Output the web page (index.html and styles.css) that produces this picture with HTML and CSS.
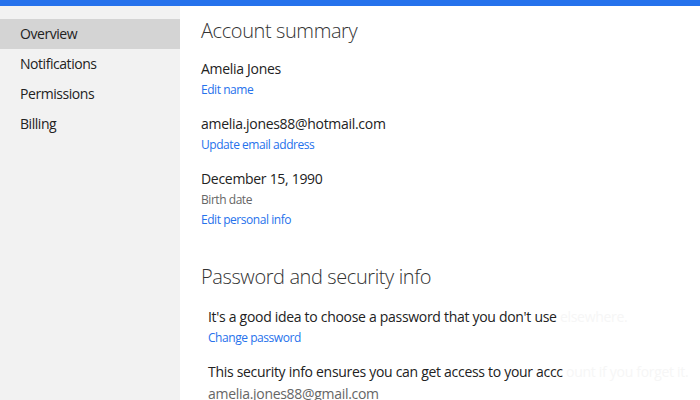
FILE: index.html
```html
<!DOCTYPE html>
<html>
<head>
<meta charset="utf-8">
<link rel="stylesheet" href="styles.css">
</head>
<body>
<div class="topbar"></div>
<div class="layout">
  <nav class="sidebar">
    <a class="nav-item active">Overview</a>
    <a class="nav-item">Notifications</a>
    <a class="nav-item">Permissions</a>
    <a class="nav-item">Billing</a>
  </nav>
  <main class="main">
    <h1 class="heading">Account summary</h1>
    <section class="group">
      <div class="value">Amelia Jones</div>
      <a class="link">Edit name</a>
    </section>
    <section class="group">
      <div class="value">amelia.jones88@hotmail.com</div>
      <a class="link">Update email address</a>
    </section>
    <section class="group">
      <div class="value">December 15, 1990</div>
      <div class="label">Birth date</div>
      <a class="link">Edit personal info</a>
    </section>
    <h1 class="heading second">Password and security info</h1>
    <div class="indent">
      <section class="group first">
        <div class="value">It's a good idea to choose a password that you don't use<span class="fade"> elsewhere.</span></div>
        <a class="link">Change password</a>
      </section>
      <section class="group">
        <div class="value">This security info ensures you can get access to your accc<span class="fade"> ount if you forget it.</span></div>
        <div class="value muted">amelia.jones88@gmail.com</div>
      </section>
    </div>
  </main>
</div>
</body>
</html>
```
FILE: styles.css
```css
html, body {
  margin: 0;
  padding: 0;
  background: #ffffff;
  font-family: "Open Sans", "Noto Sans", "Liberation Sans", sans-serif;
  color: #222222;
  overflow: hidden;
}
.topbar {
  height: 6px;
  background: #2672ec;
}
.layout {
  display: flex;
  min-height: 394px;
}
.sidebar {
  width: 180px;
  flex: none;
  background: #f2f2f2;
  padding-top: 13px;
  display: flex;
  flex-direction: column;
}
.nav-item {
  display: block;
  height: 30px;
  line-height: 30px;
  padding-left: 20px;
  font-size: 14px;
  letter-spacing: -0.45px;
  color: #222222;
}
.nav-item.active {
  background: #d4d4d4;
}
.main {
  flex: 1;
  padding-left: 21px;
  min-width: 0;
  white-space: nowrap;
  overflow: hidden;
}
.heading {
  margin: 0;
  font-size: 20px;
  letter-spacing: -0.4px;
  font-weight: 300;
  color: #333333;
  height: 28px;
  line-height: 28px;
  padding-top: 11px;
}
.heading.second {
  padding-top: 33px;
}
.group {
  padding-top: 13px;
}
.group.first {
  padding-top: 15px;
}
.value {
  font-size: 14px;
  letter-spacing: -0.3px;
  line-height: 22px;
  height: 22px;
}
.value.muted {
  color: #666666;
}
.label {
  font-size: 12px;
  letter-spacing: -0.45px;
  line-height: 20px;
  color: #666666;
}
.link {
  display: block;
  font-size: 12px;
  letter-spacing: -0.45px;
  line-height: 20px;
  color: #2672ec;
}
.indent {
  padding-left: 7px;
}
.fade {
  color: #f6f6f6;
}
```
